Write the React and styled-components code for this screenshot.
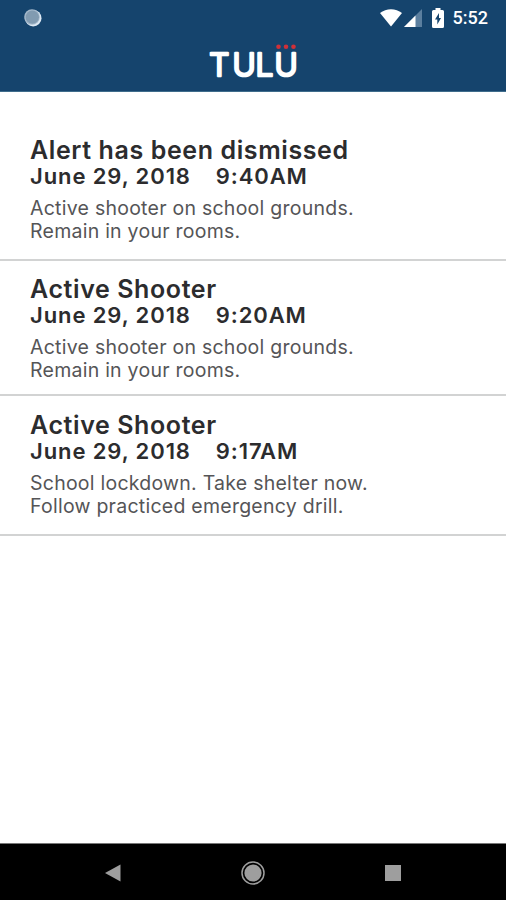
import React from 'react';
import styled, { createGlobalStyle } from "styled-components";

const alerts = [
  { title: "Alert has been dismissed", date: "June 29, 2018", time: "9:40AM", lines: ["Active shooter on school grounds.", "Remain in your rooms."], height: 169, top: 45 },
  { title: "Active Shooter", date: "June 29, 2018", time: "9:20AM", lines: ["Active shooter on school grounds.", "Remain in your rooms."], height: 135, top: 15 },
  { title: "Active Shooter", date: "June 29, 2018", time: "9:17AM", lines: ["School lockdown. Take shelter now.", "Follow practiced emergency drill."], height: 140, top: 16 },
];

function App() {
  return (
    <Screen>
      <GlobalStyle />
      <Header>
        <StatusBar>
          <svg className="sync" width="20" height="20" viewBox="0 0 20 20">
            <circle cx="10.2" cy="10.2" r="8.3" fill="#dce8f3" />
            <circle cx="9" cy="9" r="7.8" fill="#a4b8ca" />
            <circle cx="9.3" cy="9.2" r="6.6" fill="#819bb1" />
          </svg>
          <svg width="22" height="18" viewBox="0 0 22 18">
            <path d="M0 4C6.2-1.1 15.8-1.1 22 4L11 17.5Z" fill="#fff" />
          </svg>
          <svg className="signal" width="18" height="18" viewBox="0 0 18 18">
            <path d="M18 0V18H0Z" fill="#5b7f9f" />
            <path d="M11.5 6.5V18H0Z" fill="#fff" />
          </svg>
          <svg className="battery" width="12" height="20" viewBox="0 0 12 20">
            <path d="M3.5 0H8.5V2H10.5Q12 2 12 3.5V18.5Q12 20 10.5 20H1.5Q0 20 0 18.5V3.5Q0 2 1.5 2H3.5Z" fill="#fff" />
            <path d="M7 5L3 11.5H5.3V16.5L9 10H7Z" fill="#15446d" />
          </svg>
          <Clock>5:52</Clock>
        </StatusBar>
        <Logo />
      </Header>
      <List>
        {alerts.map((alert) => (
          <Alert key={alert.time} $height={alert.height} $top={alert.top}>
            <h2>{alert.title}</h2>
            <When>
              <span>{alert.date}</span>
              <span>{alert.time}</span>
            </When>
            {alert.lines.map((line) => <p key={line}>{line}</p>)}
          </Alert>
        ))}
      </List>
      <NavBar>
        <svg width="16" height="18" viewBox="0 0 16 18">
          <path d="M0 9L15.5 0.5V17.5Z" fill="#9e9e9e" />
        </svg>
        <svg width="24" height="24" viewBox="0 0 24 24">
          <circle cx="12" cy="12" r="11" fill="none" stroke="#9e9e9e" strokeWidth="1.5" />
          <circle cx="12" cy="12" r="8.6" fill="#9e9e9e" />
        </svg>
        <svg width="16" height="16" viewBox="0 0 16 16">
          <rect width="16" height="16" fill="#9e9e9e" />
        </svg>
      </NavBar>
    </Screen>
  );
}

function Logo() {
  return (
    <Brand width="98" height="48" viewBox="0 0 98 48">
      <text x="5.3 28.6 51.6 70.4" y="34.3">TULU</text>
      <g fill="#cf3038">
        <circle cx="74.5" cy="4.7" r="2.3" />
        <circle cx="82" cy="4.7" r="2.3" />
        <circle cx="89.5" cy="4.7" r="2.3" />
      </g>
    </Brand>
  );
}

const GlobalStyle = createGlobalStyle`
* {
  margin: 0;
  padding: 0;
  box-sizing: border-box;
}
body {
  background-color: #fff;
  font-family: Inter, "Liberation Sans", sans-serif;
}
`;

const Screen = styled.div`
display: flex;
flex-direction: column;
width: 506px;
height: 900px;
overflow: hidden;
`;

const Header = styled.header`
display: flex;
flex-direction: column;
align-items: center;
height: 92px;
background-color: #15446d;
border-bottom: 1px solid #3f6d8c;
`;

const StatusBar = styled.div`
display: flex;
align-items: center;
width: 100%;
height: 35px;
padding: 0 18px 0 23px;
.sync {
  margin-right: auto;
}
.signal {
  margin-left: 2px;
}
.battery {
  margin: 0 9px 0 10px;
}
`;

const Clock = styled.span`
font-family: Roboto, sans-serif;
font-size: 18px;
font-weight: 500;
line-height: 20px;
color: #fff;
`;

const Brand = styled.svg`
margin-top: 7px;
text {
  font-family: Inter, sans-serif;
  font-size: 31.5px;
  font-weight: 300;
  fill: #fff;
  stroke: #fff;
  stroke-width: 2.6px;
  stroke-linejoin: round;
}
`;

const List = styled.main`
flex: 1;
`;

const Alert = styled.article`
height: ${({ $height }) => $height}px;
padding: ${({ $top }) => $top}px 30px 0;
border-bottom: 2px solid #d2d3d3;
color: #2c2c2e;
h2 {
  margin-bottom: 1px;
  font-size: 25px;
  font-weight: 600;
  line-height: 26px;
  letter-spacing: 0.6px;
}
p {
  font-size: 19.5px;
  font-weight: 400;
  line-height: 22.5px;
  letter-spacing: 0.25px;
  color: #555557;
}
`;

const When = styled.div`
display: flex;
gap: 25px;
margin-bottom: 8px;
font-size: 22px;
font-weight: 600;
line-height: 25px;
letter-spacing: 0.9px;
`;

const NavBar = styled.nav`
display: flex;
align-items: center;
justify-content: space-between;
height: 57px;
padding: 2px 105px 0;
background-color: #000;
border-top: 1px solid #777;
`;

export default App;
